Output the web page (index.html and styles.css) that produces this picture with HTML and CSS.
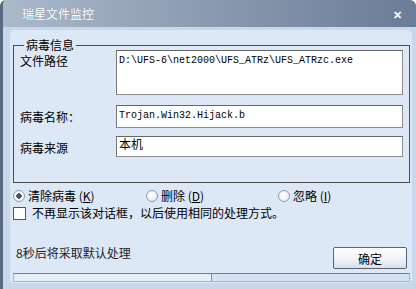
FILE: index.html
```html
<!DOCTYPE html>
<html lang="zh-CN">

<head>
  <meta charset="UTF-8">
  <title>瑞星文件监控</title>
  <link rel="stylesheet" href="styles.css">
</head>

<body>
  <div class="window">
    <div class="titlebar">
      <span class="title">瑞星文件监控</span>
      <span class="close">✕</span>
    </div>

    <div class="panel">
      <fieldset class="group">
        <legend>病毒信息</legend>

        <div class="row row-path">
          <label>文件路径</label>
          <div class="box box-tall">D:\UFS-6\net2000\UFS_ATRz\UFS_ATRzc.exe</div>
        </div>

        <div class="row row-name">
          <label>病毒名称：</label>
          <div class="box">Trojan.Win32.Hijack.b</div>
        </div>

        <div class="row row-src">
          <label>病毒来源</label>
          <div class="box box-cjk">本机</div>
        </div>
      </fieldset>

      <div class="options">
        <div class="option opt-clean"><span class="radio checked"></span>清除病毒 (<u>K</u>)</div>
        <div class="option opt-del"><span class="radio"></span>删除 (<u>D</u>)</div>
        <div class="option"><span class="radio"></span>忽略 (<u>I</u>)</div>
      </div>

      <div class="check-row">
        <span class="checkbox"></span>不再显示该对话框，以后使用相同的处理方式。
      </div>

      <div class="footer">
        <span class="countdown">8秒后将采取默认处理</span>
        <button class="ok">确定</button>
      </div>

      <div class="progress">
        <div class="progress-fill" style="width: 50%"></div>
      </div>
    </div>
  </div>
</body>

</html>
```

FILE: styles.css
```css
body {
  margin: 0;
  font-family: "Noto Sans CJK SC", "Noto Sans", sans-serif;
  font-size: 12px;
  color: #000;
}

.window {
  width: 416px;
  height: 289px;
  box-sizing: border-box;
  background: #c9d7ea;
  border-left: 3px solid #5a6a80;
  border-radius: 6px 6px 0 0;
  overflow: hidden;
}

.titlebar {
  height: 27px;
  display: flex;
  align-items: center;
  justify-content: space-between;
  padding: 0 14px 0 19px;
  background: linear-gradient(to right, #abb9cb, #8a9ab0 50%, #6a7c97);
  color: #fff;
}

.title {
  font-size: 12px;
  line-height: 14px;
  text-shadow: 0 0 1px #7c8ca4;
}

.close {
  font-size: 11px;
  font-weight: bold;
  line-height: 12px;
}

.panel {
  margin: 3px 4px 0 7px;
  height: 253px;
  background: #dde8f7;
  border-radius: 5px 5px 4px 4px;
  padding: 0 2px 0 3px;
  position: relative;
}

.group {
  margin: 0;
  padding: 0 6px 0 6px;
  border: 1px solid #4c4c4c;
  height: 145px;
  box-sizing: border-box;
  position: relative;
  top: 8px;
}

.group legend {
  margin-left: 4px;
  padding: 0 2px;
  line-height: 14px;
}

.row {
  display: flex;
  align-items: flex-start;
}

.row label {
  width: 96px;
}

.row-path {
  margin-top: -2px;
}

.row-path label {
  padding-top: 2px;
}

.row-name {
  margin-top: 10px;
  align-items: center;
}

.row-src {
  margin-top: 8px;
}

.row-src label {
  padding-top: 3px;
}

.box {
  width: 287px;
  height: 23px;
  box-sizing: border-box;
  background: #fff;
  border: 1px solid #8d8d8d;
  border-top-color: #666;
  border-left-color: #777;
  padding: 3px 0 0 2px;
  font-family: "Liberation Mono", monospace;
  font-size: 10px;
  line-height: 14px;
  white-space: nowrap;
}

.box-tall {
  height: 45px;
}

.box-cjk {
  font-family: "Noto Sans CJK SC", sans-serif;
  font-size: 12px;
  padding-top: 0;
  height: 21px;
}

.options {
  display: flex;
  margin-top: 14px;
  height: 14px;
  align-items: center;
}

.option {
  display: flex;
  align-items: center;
  width: 134px;
  line-height: 14px;
}

.radio {
  width: 10px;
  height: 10px;
  border: 1px solid #8a9bb3;
  border-radius: 50%;
  background: radial-gradient(circle at 40% 40%, #fff, #e4e8ee);
  margin-right: 3px;
  box-sizing: content-box;
}

.radio.checked {
  background: radial-gradient(circle, #4a5568 0 2.5px, #fff 3px, #e4e8ee);
}

.option u {
  text-decoration: underline;
}

.opt-del {
  margin-left: 1px;
}

.check-row {
  display: flex;
  align-items: center;
  margin-top: 2px;
  line-height: 16px;
}

.checkbox {
  width: 11px;
  height: 11px;
  border: 1px solid #555;
  background: #fff;
  margin-right: 6px;
}

.footer {
  display: flex;
  justify-content: space-between;
  align-items: flex-start;
  margin-top: 26px;
  padding-left: 3px;
  padding-right: 3px;
}

.countdown {
  color: #222;
  line-height: 14px;
  margin-top: -1px;
}

.ok {
  width: 74px;
  height: 22px;
  border: 1px solid #5b6370;
  border-radius: 2px;
  background: linear-gradient(#ffffff, #eef2f8 60%, #d8e0ec);
  font-family: "Noto Sans CJK SC", sans-serif;
  font-size: 12px;
  padding: 0;
  color: #000;
}

.progress {
  margin-top: 4px;
  height: 7px;
  border: 1px solid #a9b6c8;
  border-top-color: #6f7f96;
  background: #d7e2f2;
  margin-right: 0;
}

.progress-fill {
  height: 100%;
  background: #e6eefa;
  border-right: 1px solid #8091a8;
  box-sizing: border-box;
}
```
